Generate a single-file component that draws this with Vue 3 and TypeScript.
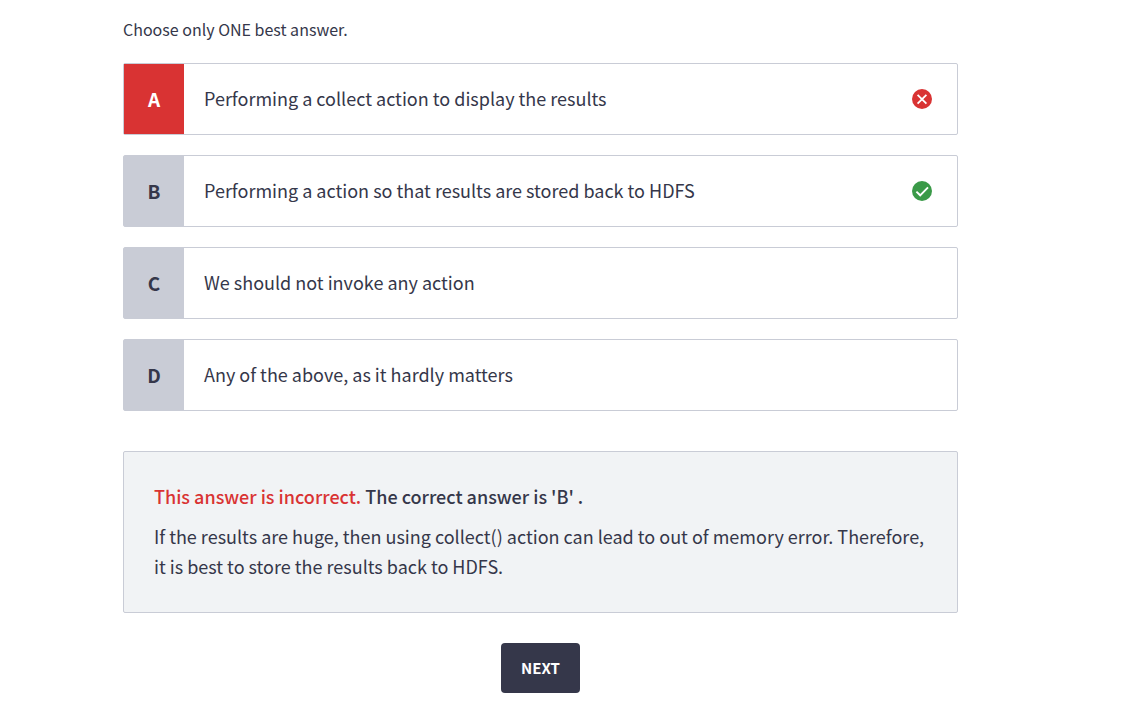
<script setup lang="ts">
import { ref } from 'vue'

type Mark = 'wrong' | 'right' | null

interface Option {
  letter: string
  text: string
  mark: Mark
}

const options: Option[] = [
  { letter: 'A', text: 'Performing a collect action to display the results', mark: 'wrong' },
  { letter: 'B', text: 'Performing a action so that results are stored back to HDFS', mark: 'right' },
  { letter: 'C', text: 'We should not invoke any action', mark: null },
  { letter: 'D', text: 'Any of the above, as it hardly matters', mark: null },
]

const chosen = ref('A')
</script>

<template>
  <main class="quiz">
    <p id="hint" class="hint">Choose only ONE best answer.</p>

    <div class="options" role="group" aria-labelledby="hint">
      <button
        v-for="option in options"
        :key="option.letter"
        type="button"
        class="option"
        :class="{ wrong: option.mark === 'wrong' }"
        :aria-pressed="chosen === option.letter"
      >
        <span class="letter">{{ option.letter }}</span>
        <span class="text">{{ option.text }}</span>
        <svg v-if="option.mark" class="mark" viewBox="0 0 20 20" aria-hidden="true">
          <template v-if="option.mark === 'wrong'">
            <circle cx="10" cy="10" r="10" fill="#d93333" />
            <path d="M5.6 5.9l8.8 8.8M14.4 5.9l-8.8 8.8" fill="none" stroke="#fff" stroke-width="1.8" />
          </template>
          <template v-else>
            <circle cx="10" cy="10" r="10" fill="#3a9a48" />
            <path d="M4.4 10.6l3.8 3.7 7.8-8" fill="none" stroke="#fff" stroke-width="1.9" />
          </template>
        </svg>
      </button>
    </div>

    <section class="feedback">
      <p class="verdict"><span class="bad">This answer is incorrect.</span> The correct answer is 'B' .</p>
      <p class="reason">
        If the results are huge, then using collect() action can lead to out of memory error. Therefore, it is best to
        store the results back to HDFS.
      </p>
    </section>

    <button type="button" class="next">NEXT</button>
  </main>
</template>

<style>
body {
  margin: 0;
  background: #fff;
}
</style>

<style scoped>
.quiz {
  display: flex;
  flex-direction: column;
  padding: 18px 167px 17px 123px;
  color: #35374a;
  font-family: "Noto Sans CJK SC", "Noto Sans", sans-serif;
  font-size: 18px;
  line-height: 30px;
}

p {
  margin: 0;
}

button {
  font: inherit;
  color: inherit;
  cursor: pointer;
}

.hint {
  margin-bottom: 23px;
  font-size: 16px;
  line-height: 22px;
}

.options {
  display: flex;
  flex-direction: column;
  gap: 20px;
}

.option {
  display: flex;
  align-items: center;
  min-height: 72px;
  padding: 0;
  padding-right: 25px;
  border: 1px solid #c9ccd6;
  border-radius: 2px;
  background: #fff;
  text-align: left;
}

.letter {
  display: flex;
  flex: 0 0 60px;
  align-items: center;
  align-self: stretch;
  justify-content: center;
  background: #c9ccd6;
  font-size: 19px;
  font-weight: 700;
}

.wrong .letter {
  background: #d93333;
  color: #fff;
}

.text {
  flex: 1;
  padding: 19px 20px 21px;
}

.mark {
  width: 20px;
  height: 20px;
}

.feedback {
  margin-top: 40px;
  padding: 29px 30px 31px;
  border: 1px solid #c9ccd6;
  border-radius: 2px;
  background: #f1f3f5;
}

.verdict {
  margin-bottom: 10px;
  font-weight: 500;
}

.bad {
  color: #d93333;
}

.next {
  align-self: center;
  margin-top: 30px;
  padding: 10px 20px;
  border: 0;
  border-radius: 4px;
  background: #35374a;
  color: #fff;
  font-size: 15px;
  font-weight: 700;
  line-height: 30px;
}
</style>
